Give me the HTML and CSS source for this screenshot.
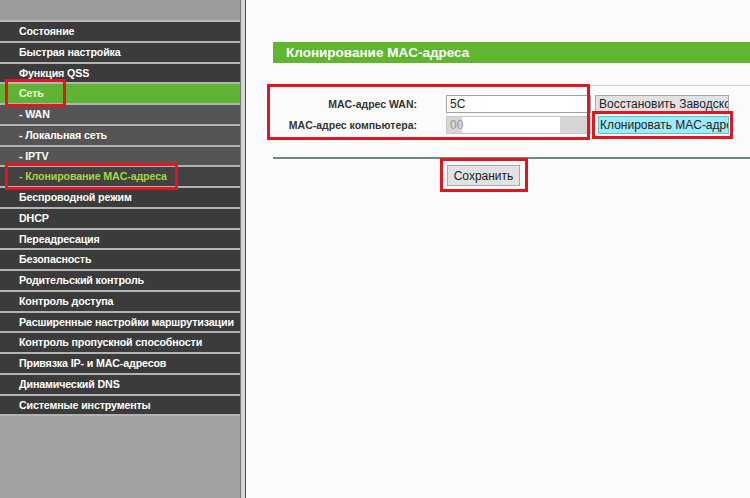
FILE: index.html
```html
<!DOCTYPE html>
<html lang="ru">
<head>
    <meta charset="UTF-8">
    <title>Клонирование MAC-адреса</title>
    <link rel="stylesheet" href="styles.css">
</head>
<body>
    <div class="page">
        <div class="sidebar">
            <div class="side-top"></div>
            <ul class="menu">
                <li>Состояние</li>
                <li>Быстрая настройка</li>
                <li>Функция QSS</li>
                <li class="active">Сеть</li>
                <li class="sub">- WAN</li>
                <li class="sub">- Локальная сеть</li>
                <li class="sub">- IPTV</li>
                <li class="sub current">- Клонирование MAC-адреса</li>
                <li>Беспроводной режим</li>
                <li>DHCP</li>
                <li>Переадресация</li>
                <li>Безопасность</li>
                <li>Родительский контроль</li>
                <li>Контроль доступа</li>
                <li>Расширенные настройки маршрутизации</li>
                <li>Контроль пропускной способности</li>
                <li>Привязка IP- и MAC-адресов</li>
                <li>Динамический DNS</li>
                <li>Системные инструменты</li>
            </ul>
        </div>
        <div class="divider"></div>
        <div class="main">
            <div class="title-bar">Клонирование MAC-адреса</div>
            <div class="rule thin"></div>
            <div class="form">
                <div class="form-row">
                    <label>MAC-адрес WAN:</label>
                    <input type="text" class="field" value="5C">
                    <button class="btn">Восстановить Заводской MAC-адрес</button>
                </div>
                <div class="form-row">
                    <label>MAC-адрес компьютера:</label>
                    <input type="text" class="field disabled" value="00" disabled>
                    <button class="btn clone">Клонировать MAC-адрес</button>
                </div>
            </div>
            <div class="rule thick"></div>
            <div class="actions">
                <button class="btn save">Сохранить</button>
            </div>
        </div>

        <!-- красные рамки поверх скриншота -->
        <div class="mark" style="left: 5px; top: 79px; width: 61px; height: 28px;"></div>
        <div class="mark" style="left: 5px; top: 163px; width: 173px; height: 27px;"></div>
        <div class="mark" style="left: 267px; top: 84px; width: 323px; height: 56px;"></div>
        <div class="mark" style="left: 592px; top: 111px; width: 141px; height: 28px;"></div>
        <div class="mark" style="left: 440px; top: 158px; width: 88px; height: 34px;"></div>
    </div>
</body>
</html>
```

FILE: styles.css
```css
html, body {
    margin: 0;
    height: 100%;
}

body {
    font-family: "Liberation Sans", Arial, sans-serif;
    background: #fbfbfb;
}

.page {
    position: relative;
    display: flex;
    height: 498px;
    overflow: hidden;
}

/* Левое меню */
.sidebar {
    width: 240px;
    background: #a2a2a2;
    display: flex;
    flex-direction: column;
}

.side-top {
    height: 20px;
    background: #9c9c9c;
    border-bottom: 2px solid #b8b8b8;
}

.menu {
    list-style: none;
    margin: 0;
    padding: 0;
}

.menu li {
    height: 18.75px;
    line-height: 18.75px;
    padding-left: 19px;
    background: #3b3b3b;
    border-bottom: 2px solid #b3b3b3;
    color: #ffffff;
    font-size: 10.7px;
    font-weight: bold;
    letter-spacing: -0.15px;
    white-space: nowrap;
}

.menu li.sub {
    background: #555555;
}

.menu li.active {
    background: #5eb432;
    color: #e9ffd9;
}

.menu li.current {
    background: #424242;
    color: #a6d63f;
}

.divider {
    width: 6px;
    background: #d6d6d6;
    border-left: 1px solid #7a7a7a;
    border-right: 1px solid #4a4a4a;
    box-sizing: border-box;
}

/* Основная часть */
.main {
    flex: 1;
    padding: 42px 0 0 27px;
    border-top: 3px solid #d4d4d4;
    box-sizing: border-box;
    margin-top: -3px;
}

.title-bar {
    height: 21px;
    line-height: 21px;
    background: #61b52f;
    color: #ffffff;
    font-size: 13.5px;
    font-weight: bold;
    padding-left: 13px;
}

.rule.thin {
    margin-top: 22px;
    border-top: 1px solid #c9d6cf;
}

.rule.thick {
    margin-top: 22px;
    border-top: 2px solid #6f8b80;
}

.form {
    padding-top: 7px;
}

.form-row {
    display: flex;
    align-items: center;
    height: 21px;
}

.form-row label {
    width: 144px;
    text-align: right;
    padding-right: 29px;
    font-size: 10.5px;
    font-weight: bold;
    color: #333333;
}

.field {
    width: 145px;
    height: 18px;
    box-sizing: border-box;
    border: 1px solid #a0a0a0;
    background: #ffffff;
    font-family: "Liberation Sans", Arial, sans-serif;
    font-size: 12px;
    padding: 0 3px;
    margin: 0;
    color: #222222;
}

.field.disabled {
    border-color: #c8c8c8;
    background: linear-gradient(to right, #d6d6d6 0, #d6d6d6 15px, #ffffff 15px, #ffffff 113px, #d6d6d6 113px);
    color: #9a9a9a;
}

.btn {
    font-family: "Liberation Sans", Arial, sans-serif;
    font-size: 12px;
    color: #222222;
    background: #e2e2e2;
    border: 1px solid #a8a8a8;
    margin: 0 0 0 4px;
    padding: 0 3px;
    height: 17px;
    width: 134px;
    overflow: hidden;
    white-space: nowrap;
    text-align: left;
}

.btn.clone {
    margin-left: 7px;
    width: 131px;
    height: 18px;
    background: #9cecfb;
    border-color: #6fb7c4;
    padding: 0 1px;
}

.actions {
    padding: 6px 0 0 174px;
}

.btn.save {
    margin: 0;
    width: 73px;
    height: 21px;
    text-align: center;
    padding: 0;
}

/* Красные рамки */
.mark {
    position: absolute;
    border: 3px solid #e3161f;
    box-sizing: border-box;
}
```
